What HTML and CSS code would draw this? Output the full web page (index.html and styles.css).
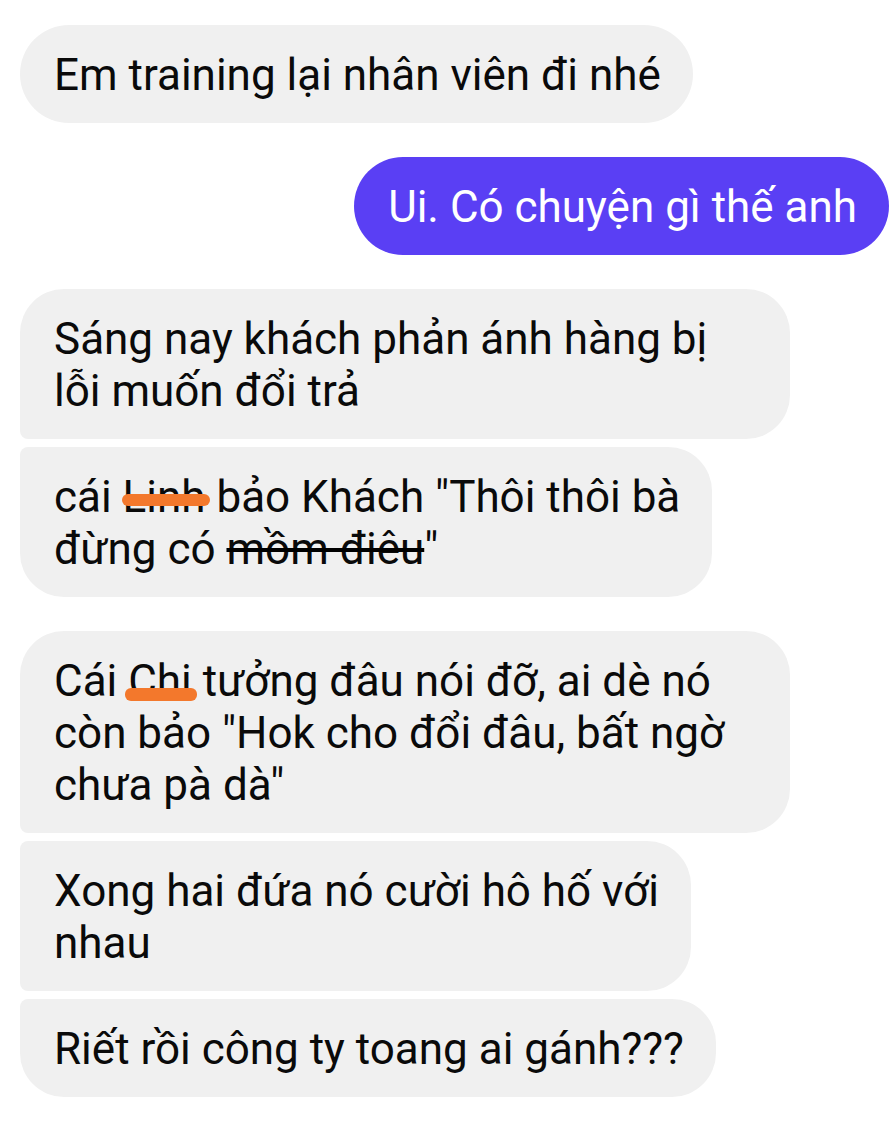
FILE: index.html
```html
<!DOCTYPE html>
<html lang="vi">
<head>
<meta charset="utf-8">
<title>Chat</title>
<link rel="stylesheet" href="styles.css">
</head>
<body>
<main class="chat">
  <div class="msg in solo">Em training lại nhân viên đi nhé</div>
  <div class="msg out solo">Ui. Có chuyện gì thế anh</div>

  <div class="group">
    <div class="msg in first wide">Sáng nay khách phản ánh hàng bị<br>lỗi muốn đổi trả</div>
    <div class="msg in last">cái <span class="scribble scribble-mid">Linh</span> bảo Khách "Thôi thôi bà<br>đừng có <span class="strike">mồm điêu</span>"</div>
  </div>

  <div class="group">
    <div class="msg in first wide">Cái <span class="scribble scribble-low">Chi</span> tưởng đâu nói đỡ, ai dè nó<br>còn bảo "Hok cho đổi đâu, bất ngờ<br>chưa pà dà"</div>
    <div class="msg in middle">Xong hai đứa nó cười hô hố với<br>nhau</div>
    <div class="msg in last">Riết rồi công ty toang ai gánh???</div>
  </div>
</main>
</body>
</html>
```

FILE: styles.css
```css
html, body {
  margin: 0;
  padding: 0;
  background: #ffffff;
}

body {
  width: 890px;
  height: 1132px;
  overflow: hidden;
  font-family: Roboto, "Noto Sans", "Liberation Sans", sans-serif;
}

.chat {
  display: flex;
  flex-direction: column;
  gap: 34px;
  padding: 25px 1px 0 20px;
}

.group {
  display: flex;
  flex-direction: column;
  gap: 8px;
}

.msg {
  box-sizing: border-box;
  width: fit-content;
  padding: 24px 32px 22px 34px;
  font-size: 44px;
  line-height: 52px;
  color: #0a0a0a;
  border-radius: 49px;
  white-space: nowrap;
}

.msg.in {
  background: #f0f0f0;
  align-self: flex-start;
}

.msg.out {
  background: #5a3ff4;
  color: #ffffff;
  align-self: flex-end;
}

.msg.wide {
  width: 770px;
}

.msg.first {
  border-radius: 44px 44px 44px 8px;
}

.msg.middle {
  border-radius: 8px 44px 44px 8px;
}

.msg.last {
  border-radius: 8px 44px 44px 44px;
}

.scribble {
  position: relative;
}

.scribble::after {
  content: "";
  position: absolute;
  background: #f3782c;
  border-radius: 6px;
}

.scribble-mid::after {
  left: -1px;
  right: -4px;
  top: 23px;
  height: 12px;
}

.scribble-low::after {
  left: -3px;
  right: -5px;
  top: 33px;
  height: 13px;
}

.strike {
  text-decoration: line-through;
  text-decoration-thickness: 4px;
  text-decoration-color: #000000;
}
```
